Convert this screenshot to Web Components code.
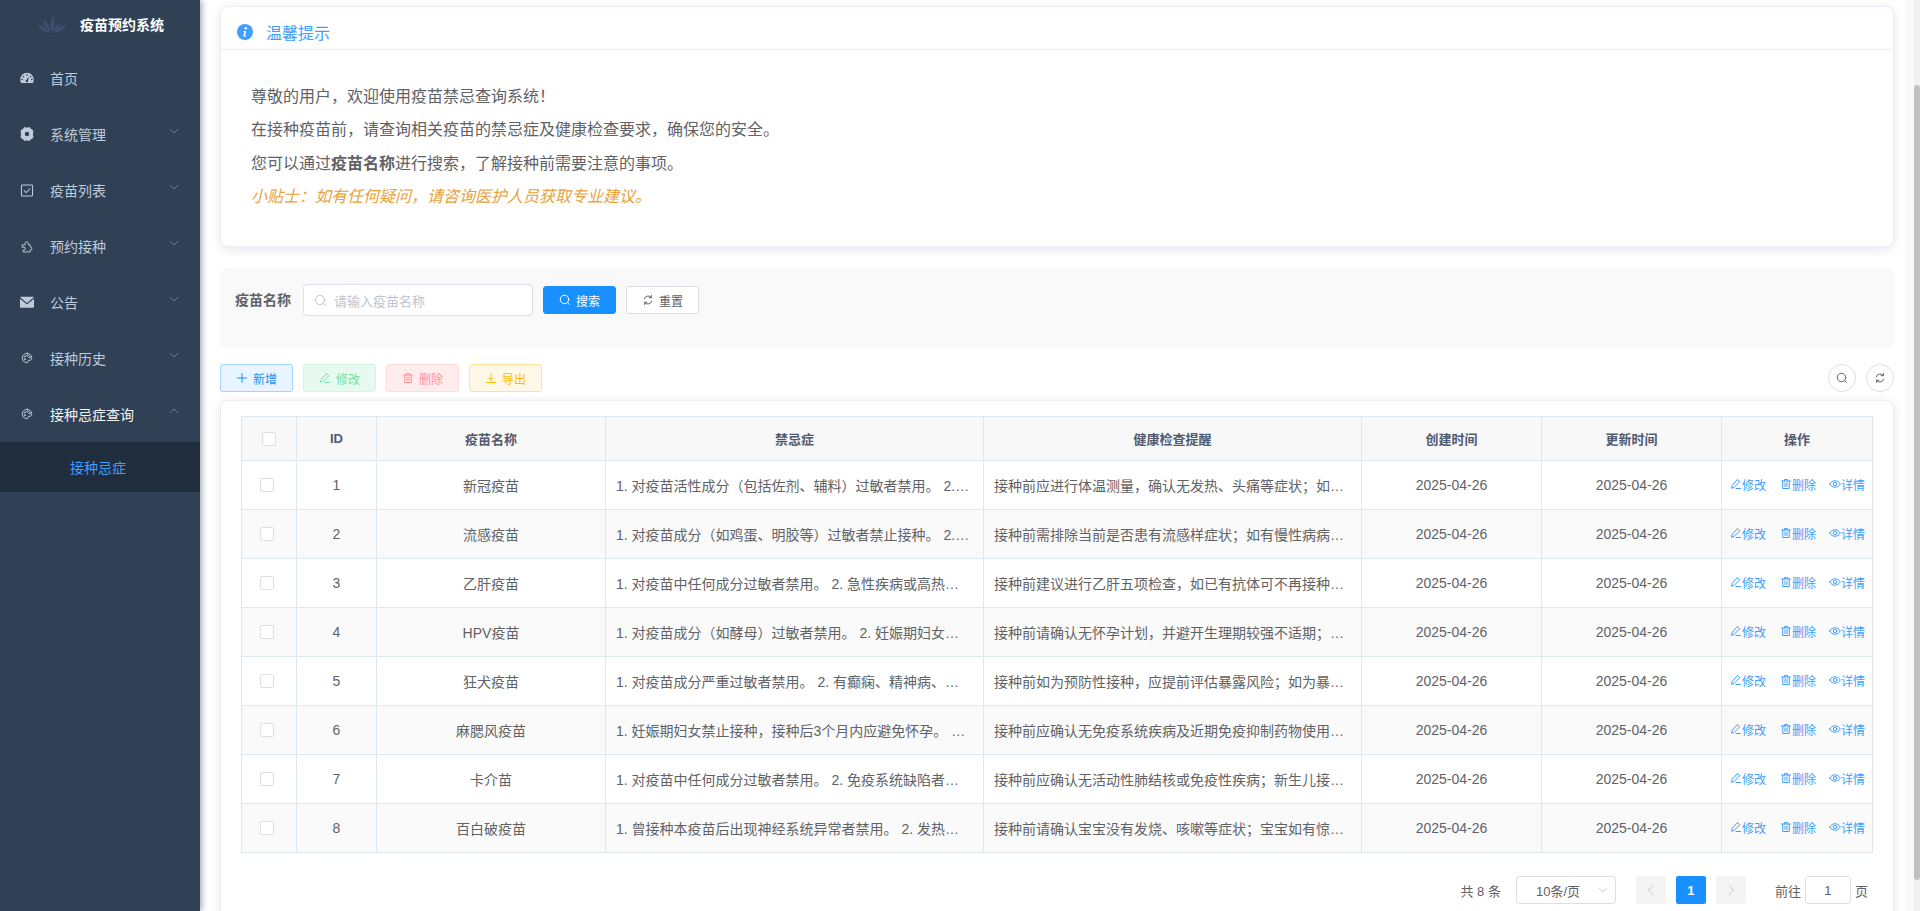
<!DOCTYPE html>
<html lang="zh-CN">
<head>
<meta charset="utf-8">
<title>疫苗预约系统</title>
<style>
html,body{margin:0;height:100%;overflow:hidden;background:#fff}
body{font-family:"Liberation Sans","Noto Sans CJK SC",sans-serif;font-size:14px;color:#606266}
</style>
</head>
<body>
<app-shell>
  <side-menu slot="side" title-text="疫苗预约系统">
    <menu-row icon="gauge">首页</menu-row>
    <menu-row icon="gear" arrow="down">系统管理</menu-row>
    <menu-row icon="check" size="15" arrow="down">疫苗列表</menu-row>
    <menu-row icon="puzzle" size="13" arrow="down">预约接种</menu-row>
    <menu-row icon="mail" arrow="down">公告</menu-row>
    <menu-row icon="palette" size="12" arrow="down">接种历史</menu-row>
    <menu-row icon="palette" size="12" arrow="up" active>接种忌症查询</menu-row>
    <sub-row>接种忌症</sub-row>
  </side-menu>
  <tip-card>
    <span slot="title">温馨提示</span>
    <p>尊敬的用户，欢迎使用疫苗禁忌查询系统！</p>
    <p>在接种疫苗前，请查询相关疫苗的禁忌症及健康检查要求，确保您的安全。</p>
    <p>您可以通过<strong>疫苗名称</strong>进行搜索，了解接种前需要注意的事项。</p>
    <p><em>小贴士：如有任何疑问，请咨询医护人员获取专业建议。</em></p>
  </tip-card>
  <search-panel></search-panel>
  <tool-bar></tool-bar>
  <table-card></table-card>
</app-shell>

<script>
const ICONS = {
  search:'<circle cx="11" cy="11" r="8.5"/><path d="M17.5 17.5L21 21"/>',
  refresh:'<path d="M4.5 10A8 8 0 0 1 18.5 7"/><path d="M19.5 14A8 8 0 0 1 5.5 17"/><path d="M18.8 3v4.4h-4.4"/><path d="M5.2 21v-4.4h4.4"/>',
  plus:'<path d="M12 3v18M3 12h18"/>',
  edit:'<path d="M15.5 3.5l4 4L8 19l-5 1.5L4.500 15z"/><path d="M12 21h9"/>',
  trash:'<path d="M3 6h18M9 6V3h6v3M5.500 6v15h13V6M10 10v7M14 10v7"/>',
  download:'<path d="M12 3v13M7 11.500l5 5 5-5M3 21h18"/>',
  eye:'<path d="M1.500 12C4 7.500 8 5.500 12 5.500s8 2 10.500 6.500C20 16.500 16 18.500 12 18.500S4 16.500 1.500 12z"/><circle cx="12" cy="12" r="3.500"/>',
  check:'<rect x="2.500" y="2.500" width="19" height="19" rx="1.500"/><path d="M7 12l3.500 3.500L17 9"/>',
  puzzle:'<path d="M3 9h4.500V6.500a3 3 0 0 1 6 0V9H17v3.500a3 3 0 0 1 0 6V22H4v-3.500h1.500a2.500 2.500 0 0 0 0-5H3z"/>',
  palette:'<path d="M12 2.500a9.500 9.500 0 1 0 0 19c1.800 0 2.300-1 1.800-2.200-.6-1.400.2-2.800 1.800-2.800h2.400c2 0 3.500-1.500 3.500-4C21.500 6.500 17 2.500 12 2.500z"/><circle cx="8" cy="9" r="1.200"/><circle cx="13" cy="7" r="1.200"/><circle cx="17" cy="10.500" r="1.200"/><circle cx="7.500" cy="14.500" r="1.200"/>',
  down:'<path d="M3 8l9 9 9-9"/>',
  up:'<path d="M3 16l9-9 9 9"/>',
  left:'<path d="M16 3l-9 9 9 9"/>',
  right:'<path d="M8 3l9 9-9 9"/>'
};
const FILLED = {
  gauge:'<path fill-rule="evenodd" d="M12 3C5.500 3 .5 8.500.5 15c0 2 .5 4 1.500 5.500h20c1-1.500 1.500-3.500 1.500-5.500C23.500 8.500 18.500 3 12 3zM12 5.500a1.400 1.400 0 1 1 0 2.800 1.400 1.400 0 0 1 0-2.800zM6 8a1.400 1.400 0 1 1 0 2.800A1.400 1.400 0 0 1 6 8zM18 8a1.400 1.400 0 1 1 0 2.800A1.400 1.400 0 0 1 18 8zM3.700 13a1.400 1.400 0 1 1 0 2.800 1.400 1.400 0 0 1 0-2.800zM20.300 13a1.400 1.400 0 1 1 0 2.800 1.400 1.400 0 0 1 0-2.800zM15.500 9.500L13.700 16a2.200 2.200 0 1 1-2.600-.9z"/>',
  gear:'<path fill-rule="evenodd" d="M7 .5h3.500L12 1.800 13.500.5H17l1.600 2.700 2.900 1.300 1.700 3-1.200 2.600.9 1.900-.9 1.900 1.200 2.600-1.700 3-2.900 1.300L17 23.500h-3.500L12 22.200l-1.500 1.300H7l-1.600-2.700-2.900-1.300-1.700-3 1.200-2.600-.9-1.900.9-1.900L.8 7.500l1.700-3 2.900-1.300zM12 8.200a3.800 3.800 0 1 0 0 7.600 3.800 3.800 0 0 0 0-7.600z"/>',
  mail:'<path d="M2 3h20c.8 0 1.400.4 1.700 1L12 13.500.3 4C.6 3.400 1.200 3 2 3z"/><path d="M0 6.500V20c0 1 1 2 2 2h20c1 0 2-1 2-2V6.500L12 16.300z"/>'
};
function iconSvg(name,size){
  if(FILLED[name]) return `<svg width="${size}" height="${size}" viewBox="0 0 24 24" fill="currentColor" aria-hidden="true">${FILLED[name]}</svg>`;
  return `<svg width="${size}" height="${size}" viewBox="0 0 24 24" fill="none" stroke="currentColor" stroke-width="${size<=12?2:1.800}" stroke-linecap="round" stroke-linejoin="round" aria-hidden="true">${ICONS[name]}</svg>`;
}
class Base extends HTMLElement{
  render(html){ if(!this.shadowRoot) this.attachShadow({mode:'open'}); const t=document.createElement('template'); t.innerHTML=html; this.shadowRoot.appendChild(t.content.cloneNode(true)); }
}

class AppShell extends Base{
  connectedCallback(){
    this.render(`<style>
      :host{display:flex;height:911px;width:1920px;overflow:hidden}
      .side{flex:none;width:200px;position:relative;z-index:2;box-shadow:2px 0 6px rgba(0,21,41,.35)}
      main{flex:1;min-width:0;display:flex;flex-direction:column;padding:6px 20px 0;box-sizing:border-box;height:911px;overflow:hidden;background:linear-gradient(to left,#f9f9f9 9px,#fff 9px)}
      .track{flex:none;width:6px;background:#f1f1f1;height:911px}
      .thumb{margin-top:85px;height:795px;background:#c1c1c1;border-radius:3px}
    </style>
    <div class="side"><slot name="side"></slot></div>
    <main><slot></slot></main>
    <div class="track"><div class="thumb"></div></div>`);
  }
}
customElements.define('app-shell',AppShell);

class SideMenu extends Base{
  connectedCallback(){
    this.render(`<style>
      :host{display:block;height:911px;background:#304156}
      .logo{height:50px;display:flex;align-items:center;padding:0 0 3px 37px;box-sizing:border-box}
      .logo svg{flex:none;margin:1px 13px 0 0}
      .logo b{font-size:14px;font-weight:700;color:#fff;white-space:nowrap}
    </style>
    <div class="logo">
      <svg width="30" height="18" viewBox="0 0 30 18" fill="#3d4f70" aria-hidden="true">
        <path d="M15 17C13 12 13 6 16 0c2 5 2 12-1 17z"/>
        <path d="M14 17C10 15 6.500 10 6 4.500c4 2 7 7 8 12.500z"/>
        <path d="M16 17c1.500-4 4-7.500 7-9 0 4-3 8-7 9z"/>
        <path d="M13 18C8 17.500 3 15 0 10.500c5-.5 10 2.500 13 7.500z"/>
        <path d="M17 18c4-.5 9-3 13-7-5-1-10 2-13 7z"/>
      </svg>
      <b>${this.getAttribute('title-text')}</b>
    </div>
    <slot></slot>`);
  }
}
customElements.define('side-menu',SideMenu);

class MenuRow extends Base{
  connectedCallback(){
    const a=this.getAttribute('arrow'), act=this.hasAttribute('active');
    const size=this.getAttribute('size')||14;
    this.render(`<style>
      :host{display:flex;align-items:center;height:56px;padding-left:20px;box-sizing:border-box;color:${act?'#f4f4f5':'#bfcbd9'};font-size:14px;position:relative}
      .ic{width:14px;display:flex;justify-content:center;margin-right:16px;color:#bfcbd9}
      .t{white-space:nowrap}
      .ar{position:absolute;left:169px;top:20px;color:#7b8896;line-height:0}
    </style>
    <span class="ic">${iconSvg(this.getAttribute('icon'),size)}</span>
    <span class="t"><slot></slot></span>
    ${a?`<span class="ar">${iconSvg(a,10)}</span>`:''}`);
  }
}
customElements.define('menu-row',MenuRow);

class SubRow extends Base{
  connectedCallback(){
    this.render(`<style>:host{display:flex;align-items:center;height:50px;padding-left:70px;background:#1f2d3d;color:#409eff;font-size:14px}</style><slot></slot>`);
  }
}
customElements.define('sub-row',SubRow);

class TipCard extends Base{
  connectedCallback(){
    this.render(`<style>
      :host{display:block;flex:none;border:1px solid #ebeef5;border-radius:8px;background:#fff;box-shadow:0 2px 12px rgba(0,0,0,.1);height:241px;box-sizing:border-box;overflow:hidden}
      .head{height:43px;box-sizing:border-box;border-bottom:1px solid #ebeef5;display:flex;align-items:center;padding:7px 0 0 16px;color:#409eff;font-size:16px}
      .head svg{margin:1px 14px 0 0;flex:none}
      .body{padding:30px 30px 0;font-size:16px;color:#606266}
      ::slotted(p){margin:0;line-height:33.400px}
      ::slotted(*){font-size:16px}
    </style>
    <div class="head"><svg width="16" height="16" viewBox="0 0 16 16" aria-hidden="true"><circle cx="8" cy="8" r="8" fill="#409eff"/><circle cx="8.800" cy="4.300" r="1.200" fill="#fff"/><path d="M6.500 7h2.700l-1.200 4.600h1.200l-.3 1H6.100L7.300 8H6.300z" fill="#fff"/></svg><span style="margin-left:-1px"><slot name="title"></slot></span></div>
    <div class="body"><slot></slot></div>`);
  }
}
customElements.define('tip-card',TipCard);
document.querySelectorAll('tip-card em').forEach(e=>e.style.color='#e6a23c');

class MiniButton extends Base{
  connectedCallback(){
    const k=this.getAttribute('kind')||'default';
    const c={primary:['#1890ff','#1890ff','#fff'],default:['#fff','#dcdfe6','#606266'],
      blue:['#e8f4ff','#a3d3ff','#1890ff'],green:['#e7faf0','#d0f5e0','#71e2a3'],red:['#ffeded','#ffdbdb','#ff9292'],yellow:['#fff8e6','#ffe399','#ffba00']}[k];
    this.render(`<style>
      :host{display:inline-flex;flex:none;align-items:center;justify-content:center;gap:5px;width:73px;height:28px;box-sizing:border-box;border:1px solid ${c[1]};border-radius:3px;background:${c[0]};color:${c[2]};font-size:12px;white-space:nowrap}
    </style>${iconSvg(this.getAttribute('icon'),12)}<slot></slot>`);
  }
}
customElements.define('mini-button',MiniButton);

class SearchPanel extends Base{
  connectedCallback(){
    this.render(`<style>
      :host{display:flex;flex:none;align-items:flex-start;margin-top:21px;height:81px;box-sizing:border-box;padding:16px 15px 0;background:#f9f9f9;border-radius:8px}
      .lab{font-weight:700;font-size:14px;color:#606266;line-height:32px;margin-right:12px;white-space:nowrap}
      .inp{width:230px;height:32px;box-sizing:border-box;background:#fff;border:1px solid #dcdfe6;border-radius:4px;display:flex;align-items:center;padding-left:10px;gap:7px;color:#c0c4cc;font-size:13px;white-space:nowrap}
      .btns{display:flex;gap:10px;margin:2px 0 0 10px}
    </style>
    <span class="lab">疫苗名称</span>
    <div class="inp">${iconSvg('search',13)}<span>请输入疫苗名称</span></div>
    <div class="btns"><mini-button kind="primary" icon="search">搜索</mini-button><mini-button icon="refresh">重置</mini-button></div>`);
  }
}
customElements.define('search-panel',SearchPanel);

class ToolBar extends Base{
  connectedCallback(){
    this.render(`<style>
      :host{display:flex;flex:none;align-items:center;gap:10px;margin-top:15px;height:28px}
      .sp{flex:1}
      .c{width:28px;height:28px;box-sizing:border-box;border:1px solid #dcdfe6;border-radius:50%;display:flex;align-items:center;justify-content:center;color:#606266;background:#fff}
    </style>
    <mini-button kind="blue" icon="plus">新增</mini-button>
    <mini-button kind="green" icon="edit">修改</mini-button>
    <mini-button kind="red" icon="trash">删除</mini-button>
    <mini-button kind="yellow" icon="download">导出</mini-button>
    <span class="sp"></span>
    <span class="c">${iconSvg('search',12)}</span>
    <span class="c">${iconSvg('refresh',12)}</span>`);
  }
}
customElements.define('tool-bar',ToolBar);

const ROWS=[
 ['新冠疫苗','1. 对疫苗活性成分（包括佐剂、辅料）过敏者禁用。 2.…','接种前应进行体温测量，确认无发热、头痛等症状；如…'],
 ['流感疫苗','1. 对疫苗成分（如鸡蛋、明胶等）过敏者禁止接种。 2.…','接种前需排除当前是否患有流感样症状；如有慢性病病…'],
 ['乙肝疫苗','1. 对疫苗中任何成分过敏者禁用。 2. 急性疾病或高热…','接种前建议进行乙肝五项检查，如已有抗体可不再接种…'],
 ['HPV疫苗','1. 对疫苗成分（如酵母）过敏者禁用。 2. 妊娠期妇女…','接种前请确认无怀孕计划，并避开生理期较强不适期；…'],
 ['狂犬疫苗','1. 对疫苗成分严重过敏者禁用。 2. 有癫痫、精神病、…','接种前如为预防性接种，应提前评估暴露风险；如为暴…'],
 ['麻腮风疫苗','1. 妊娠期妇女禁止接种，接种后3个月内应避免怀孕。 …','接种前应确认无免疫系统疾病及近期免疫抑制药物使用…'],
 ['卡介苗','1. 对疫苗中任何成分过敏者禁用。 2. 免疫系统缺陷者…','接种前应确认无活动性肺结核或免疫性疾病；新生儿接…'],
 ['百白破疫苗','1. 曾接种本疫苗后出现神经系统异常者禁用。 2. 发热…','接种前请确认宝宝没有发烧、咳嗽等症状；宝宝如有惊…']
];
class VaccineTable extends Base{
  connectedCallback(){
    const body=ROWS.map((r,i)=>`<tr>
      <td><span class="cb b"></span></td><td>${i+1}</td><td>${r[0]}</td>
      <td class="l"><div class="el">${r[1]}</div></td><td class="l"><div class="el">${r[2]}</div></td>
      <td>2025-04-26</td><td>2025-04-26</td>
      <td class="ops"><div><a class="first">${iconSvg('edit',12)}修改</a><a>${iconSvg('trash',12)}删除</a><a>${iconSvg('eye',12)}详情</a></div></td>
    </tr>`).join('');
    this.render(`<style>
      :host{display:block;width:1631px}
      table{border-collapse:collapse;table-layout:fixed;width:1631px;font-size:14px;color:#606266}
      th,td{border:1px solid #dfe6ec;padding:0;text-align:center;box-sizing:border-box}
      th{height:44px;background:#f8f8f9;color:#515a6e;font-size:13px;font-weight:700}
      td{height:49px}
      tbody tr:nth-child(even) td{background:#fafafa}
      .l{padding:0 10px;text-align:left}
      .el{white-space:nowrap;overflow:hidden}
      .cb{display:block;width:14px;height:14px;box-sizing:border-box;border:1px solid #dcdfe6;border-radius:2px;background:#fff}
      .cb.h{margin-left:20px}.cb.b{margin-left:18px}
      .ops{font-size:12px;color:#409eff;text-align:left;padding-left:9px}
      .ops div{display:flex;gap:13px;white-space:nowrap;padding-bottom:2px}
      .ops a{display:inline-flex;align-items:center}
      .ops a.first{margin-left:-1px;margin-right:1px}
    </style>
    <table>
      <colgroup><col style="width:55px"><col style="width:80px"><col style="width:229px"><col style="width:378px"><col style="width:378px"><col style="width:180px"><col style="width:180px"><col style="width:151px"></colgroup>
      <thead><tr><th><span class="cb h"></span></th><th>ID</th><th>疫苗名称</th><th>禁忌症</th><th>健康检查提醒</th><th>创建时间</th><th>更新时间</th><th>操作</th></tr></thead>
      <tbody>${body}</tbody>
    </table>`);
  }
}
customElements.define('vaccine-table',VaccineTable);

class PageBar extends Base{
  connectedCallback(){
    this.render(`<style>
      :host{display:flex;align-items:center;justify-content:flex-end;height:28px;margin-top:23px;padding-right:5px;font-size:13px;color:#606266;white-space:nowrap}
      .total{margin-right:15px}
      .sel{width:100px;height:28px;box-sizing:border-box;border:1px solid #dcdfe6;border-radius:3px;display:flex;align-items:center;justify-content:space-between;padding:0 7px 0 19px;margin-right:20px}
      .sel span{color:#606266}.sel svg{color:#c0c4cc}
      .p{width:30px;height:28px;border-radius:2px;background:#f4f4f5;display:flex;align-items:center;justify-content:center;color:#c0c4cc;margin-right:10px;box-sizing:border-box}
      .p.on{background:#1890ff;color:#fff;font-weight:700}
      .go{margin-left:19px}
      .num{width:46px;height:28px;box-sizing:border-box;border:1px solid #dcdfe6;border-radius:3px;display:flex;align-items:center;justify-content:center;margin:0 4px}
    </style>
    <span class="total">共 8 条</span>
    <div class="sel"><span>10条/页</span>${iconSvg('down',10)}</div>
    <span class="p">${iconSvg('left',12)}</span><span class="p on">1</span><span class="p">${iconSvg('right',12)}</span>
    <span class="go">前往</span><span class="num">1</span><span>页</span>`);
  }
}
customElements.define('page-bar',PageBar);

class TableCard extends Base{
  connectedCallback(){
    this.render(`<style>
      :host{display:block;flex:none;margin-top:8px;box-sizing:border-box;height:560px;border:1px solid #ebeef5;border-radius:8px;background:#fff;box-shadow:0 2px 12px rgba(0,0,0,.1);padding:15px 20px 0}
      vaccine-table{display:block}
    </style>
    <vaccine-table></vaccine-table>
    <page-bar></page-bar>`);
  }
}
customElements.define('table-card',TableCard);
</script>
</body>
</html>
